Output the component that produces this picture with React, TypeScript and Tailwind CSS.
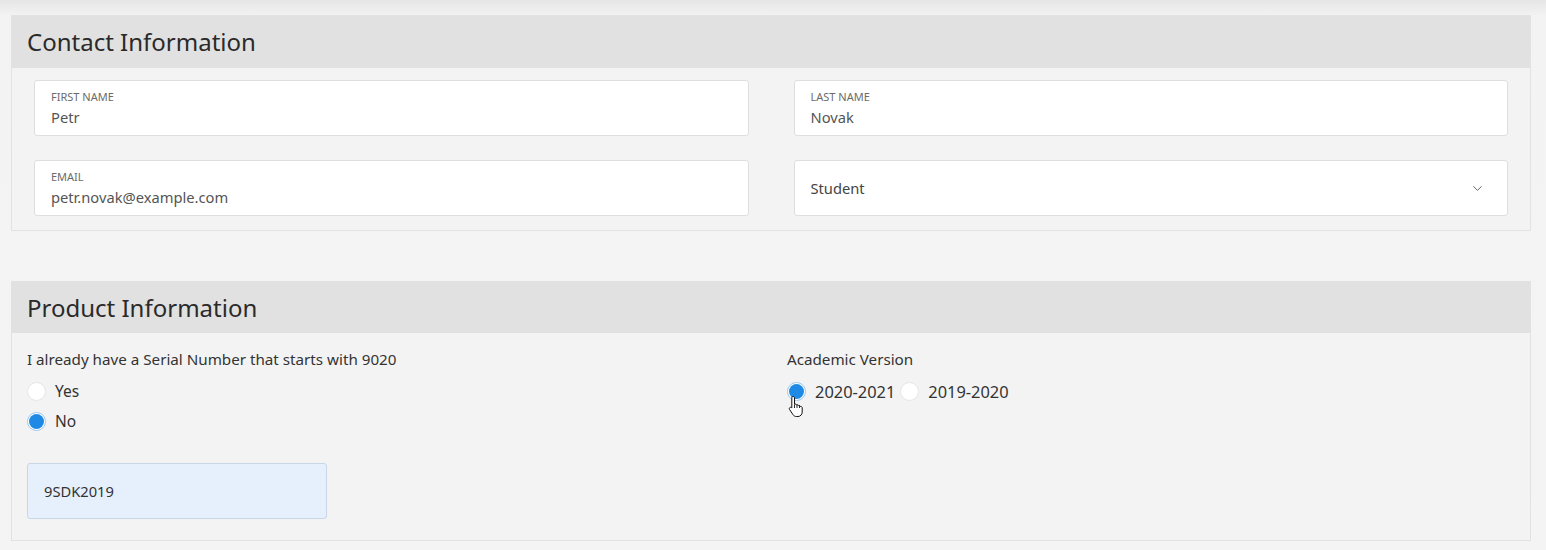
import { ChevronDown } from 'lucide-react'

const font = { fontFamily: '"Noto Sans", "Open Sans", sans-serif' }

function Field({ label, value }: { label: string; value: string }) {
    return (
        <div className="flex h-[56px] flex-col justify-center rounded-[3px] border border-[#dedede] bg-white px-4">
            <span className="text-[11px] leading-[14px] uppercase text-[#6b6b6b]">{label}</span>
            <span className="mt-[4px] text-[14.7px] leading-[18px] text-[#555]">{value}</span>
        </div>
    )
}

function Radio({ checked, label, size = 'text-[15.5px]' }: { checked?: boolean; label: string; size?: string }) {
    return (
        <label className={`flex items-center gap-[9px] leading-[19px] text-[#333] ${size}`}>
            <span
                className={
                    checked
                        ? 'flex h-[19px] w-[19px] items-center justify-center rounded-full border border-[#9cc9f0] bg-white'
                        : 'h-[19px] w-[19px] rounded-full border border-[#e6e6e6] bg-white'
                }
            >
                {checked && <span className="h-[15px] w-[15px] rounded-full bg-[#1e8ae6]" />}
            </span>
            {label}
        </label>
    )
}

function Hand() {
    return (
        <svg width="16" height="22" viewBox="0 0 16 22" className="absolute left-[788px] top-[395px]">
            <path
                d="M5 1.5c.9 0 1.5.6 1.5 1.5v6.2l.3-.1c.8-.2 1.6.1 1.9.8.7-.3 1.6 0 1.9.7.8-.3 1.7.1 1.9.9.9-.2 1.7.4 1.7 1.3v4.2c0 2.4-1.7 4.5-4.2 4.5H8.3c-1.4 0-2.5-.7-3.3-1.8L1.6 14.5c-.5-.7-.4-1.6.3-2 .6-.4 1.4-.2 1.9.4V3c0-.9.3-1.5 1.2-1.5z"
                fill="#fff"
                stroke="#111"
                strokeWidth="1"
                strokeLinejoin="round"
            />
            <path d="M6.5 9.5v3.5M9 9.5v3.5M11.5 10.5v2.5" stroke="#111" strokeWidth="0.9" />
        </svg>
    )
}

export default function App() {
    return (
        <div className="relative h-[550px] w-[1546px] overflow-hidden bg-[linear-gradient(#e6e6e6,#f3f3f3_16px,#f4f4f4)]" style={font}>
            <div className="flex flex-col gap-[50px] pt-[15px] pl-[11px] pr-[15px]">
                <section className="border border-[#e2e2e2] bg-[#f3f3f3]">
                    <div className="flex h-[52px] items-center bg-[#e1e1e1] px-[15px]">
                        <h2 className="text-[24px] text-[#2a2a2a]">Contact Information</h2>
                    </div>
                    <div className="grid grid-cols-2 gap-x-[45px] gap-y-[24px] px-[22px] pt-[12px] pb-[14px]">
                        <Field label="First Name" value="Petr" />
                        <Field label="Last Name" value="Novak" />
                        <Field label="Email" value="petr.novak@example.com" />
                        <div className="flex h-[56px] items-center justify-between rounded-[3px] border border-[#dedede] bg-white pr-[22px] pl-4">
                            <span className="text-[14.7px] text-[#444]">Student</span>
                            <ChevronDown size={15} strokeWidth={1.6} className="text-[#666]" />
                        </div>
                    </div>
                </section>

                <section className="h-[260px] border border-[#e2e2e2] bg-[#f3f3f3]">
                    <div className="flex h-[51px] items-center bg-[#e1e1e1] px-[15px]">
                        <h2 className="text-[24px] text-[#2a2a2a]">Product Information</h2>
                    </div>
                    <div className="grid grid-cols-2 gap-x-[32px] px-[15px] pt-[15px]">
                        <div className="flex flex-col">
                            <p className="text-[15.2px] leading-[22px] text-[#333]">I already have a Serial Number that starts with 9020</p>
                            <div className="mt-[12px] flex flex-col gap-[11px]">
                                <Radio label="Yes" />
                                <Radio label="No" checked />
                            </div>
                            <div className="mt-[32px] flex h-[56px] w-[300px] items-center rounded-[3px] border border-[#c8d6e8] bg-[#e6f0fc] px-4 text-[14.7px] text-[#333]">
                                9SDK2019
                            </div>
                        </div>
                        <div className="flex flex-col">
                            <p className="text-[15.2px] leading-[22px] text-[#333]">Academic Version</p>
                            <div className="mt-[12px] flex items-center gap-[5px]">
                                <Radio label="2020-2021" checked size="text-[16.4px]" />
                                <Radio label="2019-2020" size="text-[16.4px]" />
                            </div>
                        </div>
                    </div>
                </section>
            </div>
            <Hand />
        </div>
    )
}
